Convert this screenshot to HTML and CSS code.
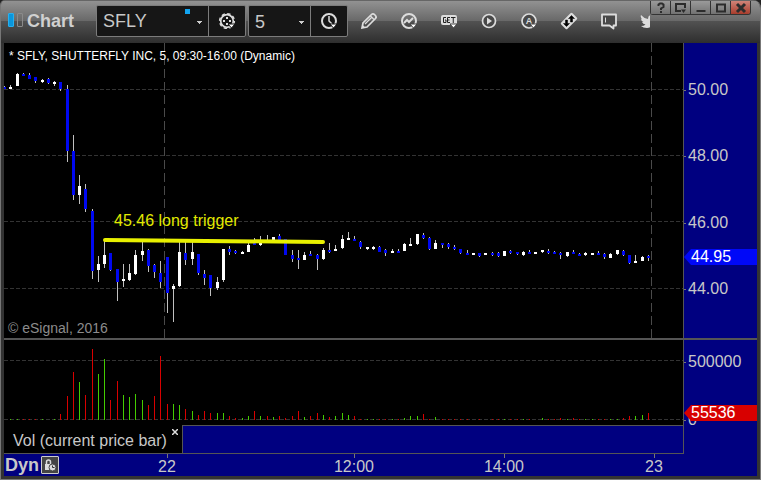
FILE: index.html
```html
<!DOCTYPE html>
<html lang="en">

<head>
    <meta charset="UTF-8">
    <meta name="viewport" content="width=device-width, initial-scale=1.0">
    <title>Chart - SFLY</title>
    <link rel="stylesheet" href="styles.css">
</head>

<body>

    <div class="window">
        <header class="titlebar">
            <span class="logo"><i class="on"></i><i></i></span>
            <h1>Chart</h1>

            <div class="combo symbol">
                <input type="text" id="symbol" value="SFLY" aria-label="Symbol">
                <span class="link-mark"></span>
                <button type="button" class="caret" aria-label="Recent symbols"></button>
                <button type="button" class="side" aria-label="Symbol settings">
                    <svg width="20" height="20" viewBox="0 0 20 20">
                        <circle cx="10" cy="10" r="6.3" fill="none" stroke="#ddd" stroke-width="1.7" />
                        <circle cx="10" cy="10" r="7.4" fill="none" stroke="#ddd" stroke-width="1.4" stroke-dasharray="3.4 2.41" />
                        <path d="M9 6h2v2H9zM9 12h2v2H9zM6 9h2v2H6zM12 9h2v2h-2z" fill="#ddd" />
                        <path d="M11 13h7l-3.500 4z" fill="#fff" stroke="#161616" />
                    </svg>
                </button>
            </div>

            <div class="combo interval">
                <select id="interval" aria-label="Interval">
                    <option>5</option>
                    <option>15</option>
                    <option>60</option>
                </select>
                <button type="button" class="side" aria-label="Time template">
                    <svg width="20" height="20" viewBox="0 0 20 20">
                        <circle cx="10" cy="10" r="7" fill="none" stroke="#ddd" stroke-width="2" />
                        <path d="M10 5v5l3 3" fill="none" stroke="#ddd" stroke-width="1.500" />
                        <path d="M11 13h7l-3.500 4z" fill="#fff" stroke="#161616" />
                    </svg>
                </button>
            </div>

            <nav class="tools">
                <button type="button" aria-label="Draw">
                    <svg width="20" height="20" viewBox="0 0 20 20">
                        <path d="M3 17l1-5 8.500-8.500q1.500-1.500 3.500.5t.5 3.500L8 16z" fill="none" stroke="#ddd" stroke-width="1.700" />
                        <path d="M6 13l7-7M11 4.500l4 4" stroke="#ddd" stroke-width="1.300" />
                        <path d="M3 17l.7-3 2.300 2.300z" fill="#ddd" />
                    </svg>
                </button>
                <button type="button" aria-label="Studies">
                    <svg width="20" height="20" viewBox="0 0 20 20">
                        <circle cx="10" cy="10" r="7" fill="none" stroke="#ddd" stroke-width="2" />
                        <path d="M5 12l3-3 2 2 4-4" fill="none" stroke="#ddd" stroke-width="2" />
                        <path d="M11 13h7l-3.500 4z" fill="#fff" stroke="#444" />
                    </svg>
                </button>
                <button type="button" aria-label="GET studies">
                    <svg width="20" height="20" viewBox="0 0 20 20">
                        <rect x="2" y="4" width="16" height="10" rx="2" fill="#ddd" />
                        <path d="M7 6.500H4.500v5H7V9H6M11 6.500H8.500v5H11M8.500 9h2M12 6.500h4.500M14.250 6.500v5.500" fill="none" stroke="#222" />
                        <path d="M11 13h7l-3.500 4z" fill="#fff" stroke="#444" />
                    </svg>
                </button>
                <button type="button" aria-label="Playback">
                    <svg width="20" height="20" viewBox="0 0 20 20">
                        <circle cx="10" cy="10" r="6.500" fill="#484848" stroke="#ddd" stroke-width="1.700" />
                        <path d="M8 6.500v7l5-3.500z" fill="#ddd" />
                    </svg>
                </button>
                <button type="button" aria-label="Alerts">
                    <svg width="20" height="20" viewBox="0 0 20 20">
                        <circle cx="10" cy="10" r="7" fill="#484848" stroke="#ddd" stroke-width="1.700" />
                        <text x="10" y="13" class="letter">A</text>
                        <path d="M11 13h7l-3.500 4z" fill="#fff" stroke="#444" />
                    </svg>
                </button>
                <button type="button" aria-label="Trade">
                    <svg width="20" height="20" viewBox="0 0 20 20">
                        <rect x="2" y="5.500" width="16" height="9" rx="1.500" fill="#ddd" transform="rotate(-45 10 10)" />
                        <path d="M12.500 4.500l3 3h-2v3.500h-2V7.500h-2zM7.500 15.500l-3-3h2V9h2v3.500h2z" fill="#000" stroke="#000" stroke-width=".5" />
                    </svg>
                </button>
                <button type="button" aria-label="Notes">
                    <svg width="20" height="20" viewBox="0 0 20 20">
                        <path d="M3 3.500h14v11h-2.500v3l-4-3H3z" fill="#484848" stroke="#ddd" stroke-width="1.800" stroke-linejoin="round" />
                        <path d="M6.500 6.500v5" stroke="#ddd" />
                    </svg>
                </button>
                <button type="button" aria-label="Share">
                    <svg width="20" height="20" viewBox="0 0 20 20">
                        <path d="M2 4q3 3.500 7 4 0-4 3.500-4 2 0 3 1l3-1-2 3q0 9-8.500 10-4 0-6-2 3 0 4.500-1.500-2.500-.5-3.500-2.500h1.500Q2 10 2 7.500l1 .5Q1 6 2 4z" fill="#ddd" />
                    </svg>
                </button>
            </nav>

            <div class="window-buttons">
                <button type="button" aria-label="Help">
                    <svg width="12" height="12" viewBox="0 0 12 12"><path d="M3.500 4V2.500L5 1.500h2l1.500 1V5L6 6.500V8M6 9v2" /></svg>
                </button>
                <button type="button" aria-label="Window menu">
                    <svg width="12" height="12" viewBox="0 0 12 12"><path d="M6 9H1V2h9v4" /><path d="M6 7.500h5L8.500 11z" class="solid" /></svg>
                </button>
                <button type="button" aria-label="Minimize">
                    <svg width="12" height="12" viewBox="0 0 12 12"><path d="M1.500 9h9" /></svg>
                </button>
                <button type="button" aria-label="Maximize">
                    <svg width="12" height="12" viewBox="0 0 12 12"><path d="M2 2.500h8v7H2z" /></svg>
                </button>
                <button type="button" class="close" aria-label="Close">
                    <svg width="12" height="12" viewBox="0 0 12 12"><path d="M2 2l8 8M10 2l-8 8" class="cross" /></svg>
                </button>
            </div>
        </header>

        <main class="chart">
            <section class="pane price">
                <svg id="price-plot" class="plot" viewBox="4 43 679 295" preserveAspectRatio="none"></svg>
                <h2>* SFLY, SHUTTERFLY INC, 5, 09:30-16:00 (Dynamic)</h2>
                <span class="note">45.46 long trigger</span>
                <span class="copyright">© eSignal, 2016</span>
            </section>
            <div class="axis price-axis">
                <span>50.00</span>
                <span>48.00</span>
                <span>46.00</span>
                <span>44.00</span>
                <b class="tag last-price">44.95</b>
            </div>

            <div class="divider"></div>

            <section class="pane volume">
                <svg id="volume-plot" class="plot" viewBox="4 340 679 85" preserveAspectRatio="none"></svg>
            </section>
            <div class="axis volume-axis">
                <span>500000</span>
                <span>0</span>
                <b class="tag last-volume">55536</b>
            </div>

            <div class="tabs">
                <div class="tab">
                    <span>Vol (current price bar)</span>
                    <button type="button" aria-label="Remove study">
                        <svg width="6" height="6" viewBox="0 0 6 6"><path d="M0 0l6 6M6 0L0 6" stroke="#ddd" stroke-width="1.500" /></svg>
                    </button>
                </div>
            </div>
            <div class="corner"></div>

            <div class="time-axis">
                <div class="mode">
                    <b>Dyn</b>
                    <button type="button" aria-label="Lock time">
                        <svg width="14" height="14" viewBox="0 0 14 14">
                            <path d="M3.500 6V4q0-2 2-2t2 2v2" fill="none" stroke="#ddd" stroke-width="1.500" />
                            <path d="M2 6h7v6H2z" fill="#ddd" />
                            <circle cx="9.500" cy="9.500" r="3.500" fill="#ddd" stroke="#444" />
                            <path d="M9.500 7.500v2h2" fill="none" stroke="#333" />
                        </svg>
                    </button>
                </div>
                <span>22</span>
                <span>12:00</span>
                <span>14:00</span>
                <span>23</span>
            </div>
        </main>
    </div>

    <script src="chart.js"></script>

</body>

</html>
```
FILE: styles.css
```css
* {
    box-sizing: border-box;
}

body {
    margin: 0;
    background-color: #222;
    font-family: "Liberation Sans", Arial, sans-serif;
    font-size: 16px;
    color: #c8c8c8;
}

h1,
h2 {
    margin: 0;
}

button,
input,
select {
    margin: 0;
    padding: 0;
    border: none;
    border-radius: 0;
    background: none;
    color: inherit;
    font: inherit;
}

svg {
    display: block;
}

.window {
    display: flex;
    flex-direction: column;
    min-height: 100vh;
    border: 1px solid #777;
    border-top: none;
    border-radius: 5px 8px 0 0;
    background-color: #333;
    overflow: hidden;
}

/* Title bar */
.titlebar {
    display: flex;
    align-items: flex-start;
    height: 43px;
    padding: 0 9px 0 7px;
    border-top: 1px solid #666;
    background: linear-gradient(#929292, #686868 20px, #525252 20px, #2e2e2e);
}

.logo {
    display: flex;
    gap: 3px;
    padding-top: 12px;
}

.logo i {
    width: 6px;
    height: 14px;
    border: 1px solid #8a8a8a;
    border-radius: 1px;
}

.logo .on {
    border-color: #27b0ee;
    background-color: #0a96dc;
}

h1 {
    width: 73px;
    padding-left: 4px;
    font-size: 18px;
    line-height: 40px;
    color: #d0d0d0;
}

.combo {
    position: relative;
    display: flex;
    height: 32px;
    margin-top: 4px;
    border: 1px solid #7c7c7c;
    border-radius: 2px;
    background-color: #161616;
    font-size: 18px;
}

.symbol {
    width: 150px;
    margin-right: 2px;
}

.interval {
    width: 100px;
}

.combo input {
    flex: 1;
    min-width: 0;
    padding: 1px 0 0 6px;
}

.link-mark {
    position: absolute;
    left: 88px;
    top: 3px;
    width: 5px;
    height: 5px;
    background-color: #12a4f0;
}

.caret {
    width: 16px;
}

.caret,
.interval select {
    background-image: linear-gradient(#ccc, #ccc), linear-gradient(#ccc, #ccc), linear-gradient(#ccc, #ccc);
    background-size: 5px 1px, 3px 1px, 1px 1px;
    background-repeat: no-repeat;
}

.caret {
    background-position: 5px 15px, 6px 16px, 7px 17px;
}

.interval select {
    flex: 1;
    min-width: 0;
    padding: 1px 0 0 6px;
    appearance: none;
    background-position: right 6px top 15px, right 7px top 16px, right 8px top 17px;
}

.side {
    display: flex;
    align-items: center;
    justify-content: center;
    width: 37px;
    border-left: 1px solid #7c7c7c;
}

.tools {
    display: flex;
    flex: 1;
    min-width: 0;
    margin-left: 1px;
    overflow: hidden;
}

.tools button {
    display: flex;
    flex: none;
    align-items: center;
    justify-content: center;
    width: 40px;
    height: 40px;
}

.letter {
    fill: #ddd;
    font-size: 9px;
    font-weight: bold;
    text-anchor: middle;
}

.window-buttons {
    display: flex;
    border: 1px solid #333;
    border-width: 0 1px 1px 0;
    border-radius: 0 0 3px 3px;
    background: linear-gradient(#9a9a9a, #727272);
    overflow: hidden;
}

.window-buttons button {
    display: flex;
    align-items: center;
    justify-content: center;
    width: 20px;
    height: 13px;
    border-left: 1px solid #333;
}

.window-buttons svg {
    fill: none;
    stroke: #2c2c2c;
    stroke-width: 2;
}

.window-buttons .solid {
    fill: #2c2c2c;
    stroke: none;
}

.window-buttons .cross {
    stroke-width: 3;
}

.window-buttons .close {
    background: linear-gradient(#d08478, #a83c2c);
}

/* Chart */
.chart {
    display: grid;
    flex: 1;
    grid-template-columns: minmax(0, 1fr) 74px;
    grid-template-rows: minmax(295px, 1fr) 2px 85px 28px 23px;
    margin: 0 3px 3px;
    background-color: #000080;
}

.pane {
    position: relative;
    background-color: #000;
}

.plot {
    position: absolute;
    width: 100%;
    height: 100%;
    shape-rendering: crispEdges;
}

h2 {
    position: absolute;
    left: 5px;
    top: 5px;
    font-size: 12px;
    font-weight: normal;
    line-height: 16px;
    color: #fff;
}

.note {
    position: absolute;
    left: 110px;
    top: 169px;
    line-height: 18px;
    color: #e2ea00;
}

.copyright {
    position: absolute;
    left: 4px;
    bottom: 2px;
    font-size: 14px;
    line-height: 16px;
    color: #8c8c8c;
}

.axis {
    position: relative;
    display: flex;
    flex-direction: column;
    justify-content: space-between;
    border-left: 1px solid #555;
    line-height: 16px;
}

.axis span {
    position: relative;
    padding-left: 4px;
}

.axis span::before {
    content: "";
    position: absolute;
    left: 0;
    top: 8px;
    width: 2px;
    height: 1px;
    background-color: #777;
}

.price-axis {
    padding: 39px 0 41px;
}

.volume-axis {
    padding: 14px 0 0;
}

.volume-axis span:nth-child(2) {
    margin-bottom: -3px;
}

.tag {
    position: absolute;
    left: 0;
    right: 0;
    height: 16px;
    padding-left: 7px;
    font-weight: normal;
    color: #fff;
    clip-path: polygon(0 50%, 7px 0, 100% 0, 100% 100%, 7px 100%);
}

.last-price {
    top: 206px;
    background-color: #0008f8;
}

.last-volume {
    top: 65px;
    background-color: #d80000;
}

.divider {
    grid-column: 1 / 3;
    background-color: #555;
}

.tabs {
    border-top: 1px solid #555;
}

.tab {
    position: relative;
    width: 179px;
    height: 28px;
    margin-top: -1px;
    padding: 7px 0 0 9px;
    border-right: 1px solid #555;
    background-color: #000;
    line-height: 18px;
}

.tab button {
    position: absolute;
    right: 4px;
    top: 4px;
}

.corner {
    border-left: 1px solid #555;
}

.time-axis {
    position: relative;
    grid-column: 1 / 3;
    display: grid;
    grid-template-columns: 70px 186fr 188fr 112fr 188fr 9fr;
    line-height: 18px;
    text-align: center;
}

.time-axis::before {
    content: "";
    position: absolute;
    left: 0;
    right: 73px;
    height: 1px;
    background-color: #555;
}

.time-axis > span {
    padding-top: 5px;
    background: linear-gradient(#777, #777) center top / 1px 5px no-repeat;
}

.mode {
    display: flex;
    align-items: center;
    gap: 2px;
    padding-left: 1px;
    font-size: 18px;
}

.mode button {
    padding: 1px;
    border: 1px solid #ccc;
    border-radius: 1px;
    background-color: #444;
}
```
FILE: chart.js
```js
const UP = '#ffffff';
const DOWN = '#0008f0';

// [high, body top, body bottom, low, u = up / d = down]
const candles = [
    [86, 87, 89, 89, 'd'], [85, 87, 89, 89, 'u'], [73, 74, 86, 86, 'u'], [73, 74, 76, 76, 'd'],
    [73, 75, 79, 79, 'd'], [77, 77, 81, 83, 'd'], [79, 80, 82, 83, 'u'], [78, 79, 83, 84, 'd'],
    [81, 82, 84, 86, 'u'], [82, 82, 89, 91, 'd'], [85, 89, 151, 162, 'd'], [135, 151, 195, 200, 'd'],
    [175, 186, 195, 204, 'u'], [184, 189, 209, 212, 'd'], [209, 211, 271, 279, 'd'], [256, 264, 270, 282, 'u'],
    [240, 255, 264, 268, 'u'], [253, 253, 270, 271, 'd'], [269, 269, 282, 301, 'd'], [264, 279, 281, 287, 'u'],
    [264, 273, 280, 281, 'u'], [250, 255, 274, 275, 'u'], [242, 251, 255, 261, 'u'], [249, 250, 266, 272, 'd'],
    [264, 265, 272, 278, 'd'], [261, 273, 282, 288, 'd'], [257, 257, 293, 313, 'd'], [284, 286, 289, 322, 'u'],
    [242, 252, 286, 287, 'u'], [242, 253, 260, 265, 'd'], [242, 252, 259, 265, 'u'], [254, 254, 273, 275, 'd'],
    [270, 274, 278, 285, 'd'], [275, 275, 288, 296, 'd'], [277, 282, 288, 290, 'u'], [249, 249, 280, 282, 'u'],
    [246, 249, 252, 255, 'd'], [250, 251, 253, 254, 'd'], [251, 252, 254, 254, 'u'], [243, 245, 252, 252, 'u'],
    [238, 243, 245, 245, 'd'], [236, 243, 245, 246, 'u'], [235, 241, 243, 243, 'u'], [237, 237, 241, 241, 'u'],
    [234, 236, 240, 240, 'd'], [239, 239, 255, 255, 'd'], [250, 255, 259, 262, 'd'], [250, 258, 260, 269, 'd'],
    [252, 255, 260, 260, 'u'], [251, 254, 256, 256, 'd'], [254, 255, 259, 270, 'd'], [248, 250, 259, 260, 'u'],
    [243, 250, 252, 253, 'd'], [245, 249, 251, 251, 'u'], [235, 239, 248, 249, 'u'], [232, 238, 240, 240, 'u'],
    [236, 239, 241, 241, 'd'], [241, 242, 247, 249, 'd'], [247, 247, 249, 250, 'u'], [246, 247, 249, 250, 'u'],
    [246, 247, 252, 252, 'd'], [249, 250, 253, 256, 'd'], [249, 251, 253, 253, 'u'], [249, 251, 253, 253, 'd'],
    [243, 244, 251, 251, 'u'], [238, 244, 246, 246, 'u'], [234, 234, 244, 245, 'u'], [233, 235, 238, 239, 'd'],
    [237, 238, 249, 250, 'd'], [240, 243, 249, 249, 'u'], [243, 243, 245, 248, 'd'], [243, 244, 247, 249, 'd'],
    [245, 247, 249, 250, 'd'], [249, 249, 253, 254, 'd'], [250, 253, 255, 255, 'd'], [253, 253, 255, 255, 'u'],
    [253, 253, 256, 257, 'd'], [253, 253, 255, 255, 'u'], [252, 253, 255, 256, 'd'], [252, 253, 256, 257, 'd'],
    [251, 251, 256, 256, 'u'], [250, 251, 253, 254, 'd'], [252, 252, 254, 255, 'd'], [251, 252, 255, 256, 'u'],
    [250, 252, 254, 254, 'd'], [252, 252, 254, 254, 'u'], [250, 250, 252, 253, 'u'], [249, 251, 253, 254, 'd'],
    [251, 252, 254, 254, 'd'], [252, 253, 255, 259, 'd'], [252, 252, 256, 257, 'u'], [250, 252, 254, 254, 'd'],
    [253, 254, 256, 256, 'd'], [252, 253, 255, 256, 'u'], [253, 253, 255, 255, 'u'], [251, 253, 255, 255, 'd'],
    [253, 254, 257, 259, 'd'], [253, 254, 258, 258, 'u'], [250, 250, 254, 255, 'u'], [250, 251, 255, 256, 'd'],
    [255, 255, 263, 264, 'd'], [255, 261, 263, 263, 'u'], [256, 257, 261, 261, 'u'], [255, 256, 258, 261, 'd']
];

// g = green, r = red, followed by the bar height
const volumes = ('r0 g1 g1 r1 r1 r1 g1 r0 g1 r6 r24 r48 g38 r25 r71 g46 g61 r20 r39 g25 g23 g26 g20 r15 r24 ' +
    'r64 r16 g16 g15 r11 g9 r5 r9 r7 g7 g7 r4 r2 g2 g4 r9 g4 r4 g3 r4 r2 r4 r9 g3 r4 r7 g5 r3 g4 g7 g5 r4 ' +
    'r1 g1 g1 r1 r1 g1 r1 g2 g4 g4 r6 r1 g3 r1 r1 r1 r1 r1 r0 r1 r0 r1 r1 g1 r1 r1 g1 r1 r0 g2 r1 r1 r2 ' +
    'g1 r2 r1 g1 g1 r1 r1 g1 g1 r2 r4 g4 g5 r7').split(' ');

function barX(i) {
    return Math.floor(4.5 + i * 6.25);
}

function rect(x, y, w, h, fill) {
    return `<rect x="${x}" y="${y}" width="${w}" height="${h}" fill="${fill}"/>`;
}

function hGrid(y) {
    return `<path d="M4 ${y + 0.5}H683" stroke="#333" stroke-dasharray="4 2"/>`;
}

function drawPrice() {
    let out = [89, 155, 221, 288].map(hGrid).join('');
    [164, 651].forEach(x => {
        out += `<path d="M${x + 0.5} 43V338" stroke="#4a4a4a" stroke-dasharray="9 4"/>`;
    });
    candles.forEach(([high, top, bottom, low, dir], i) => {
        const x = barX(i);
        out += rect(x, high, 1, low - high, '#c0c0c0');
        out += rect(x - 1, top, 3, bottom - top, dir === 'u' ? UP : DOWN);
    });
    // Trigger line
    out += '<path d="M105 240L323 242" stroke="#e8f000" stroke-width="4" stroke-linecap="round" shape-rendering="auto"/>';
    document.getElementById('price-plot').innerHTML = out;
}

function drawVolume() {
    let out = [360, 419].map(hGrid).join('');
    volumes.forEach((v, i) => {
        const h = Number(v.slice(1));
        out += rect(barX(i), 420 - h, 1, h, v[0] === 'g' ? '#44cc00' : '#d80000');
    });
    document.getElementById('volume-plot').innerHTML = out;
}

drawPrice();
drawVolume();
```
